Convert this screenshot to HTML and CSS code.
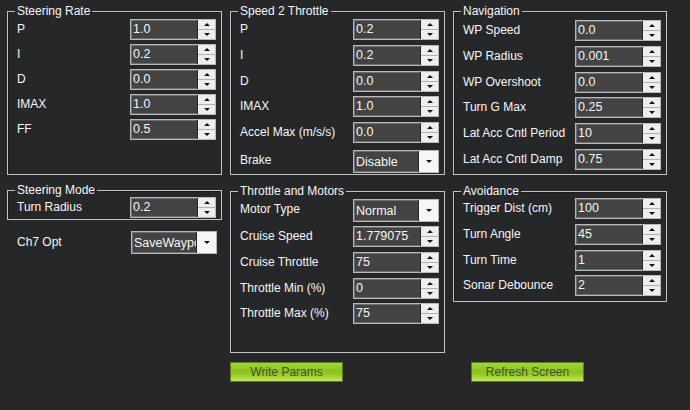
FILE: index.html
```html
<!DOCTYPE html>
<html>
<head>
<meta charset="utf-8">
<link rel="stylesheet" href="styles.css">
</head>
<body>
<div class="page">
  <div class="col">
    <div class="group g-top">
      <div class="title">Steering Rate</div>
      <div class="rows tight">
        <div class="row"><span class="lbl">P</span><div class="num"><span class="val">1.0</span><span class="spin"><i class="up"></i><i class="dn"></i></span></div></div>
        <div class="row"><span class="lbl">I</span><div class="num"><span class="val">0.2</span><span class="spin"><i class="up"></i><i class="dn"></i></span></div></div>
        <div class="row"><span class="lbl">D</span><div class="num"><span class="val">0.0</span><span class="spin"><i class="up"></i><i class="dn"></i></span></div></div>
        <div class="row"><span class="lbl">IMAX</span><div class="num"><span class="val">1.0</span><span class="spin"><i class="up"></i><i class="dn"></i></span></div></div>
        <div class="row"><span class="lbl">FF</span><div class="num"><span class="val">0.5</span><span class="spin"><i class="up"></i><i class="dn"></i></span></div></div>
      </div>
    </div>
    <div class="group g-mode">
      <div class="title">Steering Mode</div>
      <div class="rows">
        <div class="row single"><span class="lbl">Turn Radius</span><div class="num"><span class="val">0.2</span><span class="spin"><i class="up"></i><i class="dn"></i></span></div></div>
      </div>
    </div>
    <div class="loose">
      <span class="lbl">Ch7 Opt</span>
      <div class="sel"><span class="val">SaveWaypoint</span><span class="arrow"><i class="dn"></i></span></div>
    </div>
  </div>

  <div class="col">
    <div class="group g-top">
      <div class="title">Speed 2 Throttle</div>
      <div class="rows wide">
        <div class="row"><span class="lbl">P</span><div class="num"><span class="val">0.2</span><span class="spin"><i class="up"></i><i class="dn"></i></span></div></div>
        <div class="row"><span class="lbl">I</span><div class="num"><span class="val">0.2</span><span class="spin"><i class="up"></i><i class="dn"></i></span></div></div>
        <div class="row"><span class="lbl">D</span><div class="num"><span class="val">0.0</span><span class="spin"><i class="up"></i><i class="dn"></i></span></div></div>
        <div class="row"><span class="lbl">IMAX</span><div class="num"><span class="val">1.0</span><span class="spin"><i class="up"></i><i class="dn"></i></span></div></div>
        <div class="row"><span class="lbl">Accel Max (m/s/s)</span><div class="num"><span class="val">0.0</span><span class="spin"><i class="up"></i><i class="dn"></i></span></div></div>
        <div class="row selrow"><span class="lbl">Brake</span><div class="sel"><span class="val">Disable</span><span class="arrow"><i class="dn"></i></span></div></div>
      </div>
    </div>
    <div class="group g-motors">
      <div class="title">Throttle and Motors</div>
      <div class="rows wide">
        <div class="row first"><span class="lbl">Motor Type</span><div class="sel"><span class="val">Normal</span><span class="arrow"><i class="dn"></i></span></div></div>
        <div class="row"><span class="lbl">Cruise Speed</span><div class="num"><span class="val">1.779075</span><span class="spin"><i class="up"></i><i class="dn"></i></span></div></div>
        <div class="row"><span class="lbl">Cruise Throttle</span><div class="num"><span class="val">75</span><span class="spin"><i class="up"></i><i class="dn"></i></span></div></div>
        <div class="row"><span class="lbl">Throttle Min (%)</span><div class="num"><span class="val">0</span><span class="spin"><i class="up"></i><i class="dn"></i></span></div></div>
        <div class="row"><span class="lbl">Throttle Max (%)</span><div class="num"><span class="val">75</span><span class="spin"><i class="up"></i><i class="dn"></i></span></div></div>
      </div>
    </div>
  </div>

  <div class="col">
    <div class="group g-top">
      <div class="title">Navigation</div>
      <div class="rows wide nav">
        <div class="row"><span class="lbl">WP Speed</span><div class="num"><span class="val">0.0</span><span class="spin"><i class="up"></i><i class="dn"></i></span></div></div>
        <div class="row"><span class="lbl">WP Radius</span><div class="num"><span class="val">0.001</span><span class="spin"><i class="up"></i><i class="dn"></i></span></div></div>
        <div class="row"><span class="lbl">WP Overshoot</span><div class="num"><span class="val">0.0</span><span class="spin"><i class="up"></i><i class="dn"></i></span></div></div>
        <div class="row"><span class="lbl">Turn G Max</span><div class="num"><span class="val">0.25</span><span class="spin"><i class="up"></i><i class="dn"></i></span></div></div>
        <div class="row"><span class="lbl">Lat Acc Cntl Period</span><div class="num"><span class="val">10</span><span class="spin"><i class="up"></i><i class="dn"></i></span></div></div>
        <div class="row"><span class="lbl">Lat Acc Cntl Damp</span><div class="num"><span class="val">0.75</span><span class="spin"><i class="up"></i><i class="dn"></i></span></div></div>
      </div>
    </div>
    <div class="group g-avoid">
      <div class="title">Avoidance</div>
      <div class="rows wide nopad">
        <div class="row"><span class="lbl">Trigger Dist (cm)</span><div class="num"><span class="val">100</span><span class="spin"><i class="up"></i><i class="dn"></i></span></div></div>
        <div class="row"><span class="lbl">Turn Angle</span><div class="num"><span class="val">45</span><span class="spin"><i class="up"></i><i class="dn"></i></span></div></div>
        <div class="row"><span class="lbl">Turn Time</span><div class="num"><span class="val">1</span><span class="spin"><i class="up"></i><i class="dn"></i></span></div></div>
        <div class="row"><span class="lbl">Sonar Debounce</span><div class="num"><span class="val">2</span><span class="spin"><i class="up"></i><i class="dn"></i></span></div></div>
      </div>
    </div>
  </div>

  <div class="btncell c2"><button class="btn">Write Params</button></div>
  <div class="btncell c3"><button class="btn">Refresh Screen</button></div>
</div>
</body>
</html>
```

FILE: styles.css
```css
html, body {
  margin: 0;
  padding: 0;
  background: #262729;
  width: 690px;
  height: 410px;
  overflow: hidden;
  font-family: "Liberation Sans", Arial, sans-serif;
  font-size: 12px;
  color: #f2f2f2;
}

.page {
  display: grid;
  grid-template-columns: 215px 215px 214px;
  column-gap: 8px;
  row-gap: 9px;
  padding: 11px 0 0 7px;
  align-items: start;
}

.col {
  display: flex;
  flex-direction: column;
}

.group {
  box-sizing: border-box;
  border: 1px solid #c2c2c2;
  box-shadow: inset 1px 1px 0 #1c1c1c;
  padding: 0 5px 0 9px;
  display: flex;
  flex-direction: column;
}

.g-top { height: 164px; }
.g-mode { height: 30px; margin-top: 15px; }
.g-motors { height: 162px; margin-top: 16px; }
.g-avoid { height: 111px; margin-top: 16px; }

.title {
  width: fit-content;
  margin: -8px 0 0 -2px;
  padding: 0 2px;
  background: #262729;
  line-height: 14px;
  height: 14px;
  color: #f6f6f6;
}

.rows {
  display: flex;
  flex-direction: column;
}
.rows.wide { padding-top: 1px; }
.rows.wide.nav { padding-top: 2px; }
.rows.wide.nopad { padding-top: 0; }

.row {
  display: flex;
  justify-content: space-between;
  align-items: flex-start;
  height: 25px;
  flex: none;
}
.rows.tight { padding-top: 1px; }
.rows.wide .row { height: 25.8px; }
.rows.wide .row.selrow { margin-top: 2px; }
.rows.wide .row.first { height: 27px; }
.row.single { height: 21px; }

.lbl {
  line-height: 21px;
  white-space: nowrap;
  color: #f6f6f6;
}

.num, .sel {
  box-sizing: border-box;
  width: 86px;
  height: 21px;
  border: 1px solid #b9b9b9;
  box-shadow: inset 0 0 0 1px #6e6e6e;
  display: flex;
  flex: none;
  background: #434343;
}
.sel { height: 23px; }

.val {
  flex: 1;
  min-width: 0;
  overflow: hidden;
  white-space: nowrap;
  padding: 1px 0 0 2px;
  line-height: 16px;
  color: #f6f6f6;
  font-size: 12.5px;
}
.sel .val { padding-top: 3px; }

.spin {
  width: 17px;
  flex: none;
  display: flex;
  flex-direction: column;
  background: #eeeeee;
  border-left: 1px solid #262626;
}
.spin i, .arrow i {
  flex: 1;
  display: flex;
  align-items: center;
  justify-content: center;
}
.spin i.up { border-bottom: 1px solid #b0b0b0; }
.spin i.up::before {
  content: "";
  border-left: 3px solid transparent;
  border-right: 3px solid transparent;
  border-bottom: 3px solid #111;
}
.spin i.dn::before, .arrow i.dn::before {
  content: "";
  border-left: 3px solid transparent;
  border-right: 3px solid transparent;
  border-top: 3px solid #111;
}

.arrow {
  width: 19px;
  flex: none;
  display: flex;
  background: #f6f6f6;
  border-left: 1px solid #262626;
}

.loose {
  display: flex;
  justify-content: space-between;
  align-items: center;
  margin-top: 11px;
  padding: 0 5px 0 10px;
  height: 23px;
}

.btncell { grid-row: 2; }
.btncell.c2 { grid-column: 2; }
.btncell.c3 { grid-column: 3; padding-left: 18px; }

.btn {
  box-sizing: border-box;
  width: 113px;
  height: 20px;
  margin: 0;
  padding: 0;
  border: 1px solid #5f7d1c;
  background: linear-gradient(#a4d43a, #8cc21d 45%, #95c826 60%, #bfe65a);
  color: #42541f;
  font-family: "Liberation Sans", Arial, sans-serif;
  font-size: 12px;
  line-height: 18px;
}
```
